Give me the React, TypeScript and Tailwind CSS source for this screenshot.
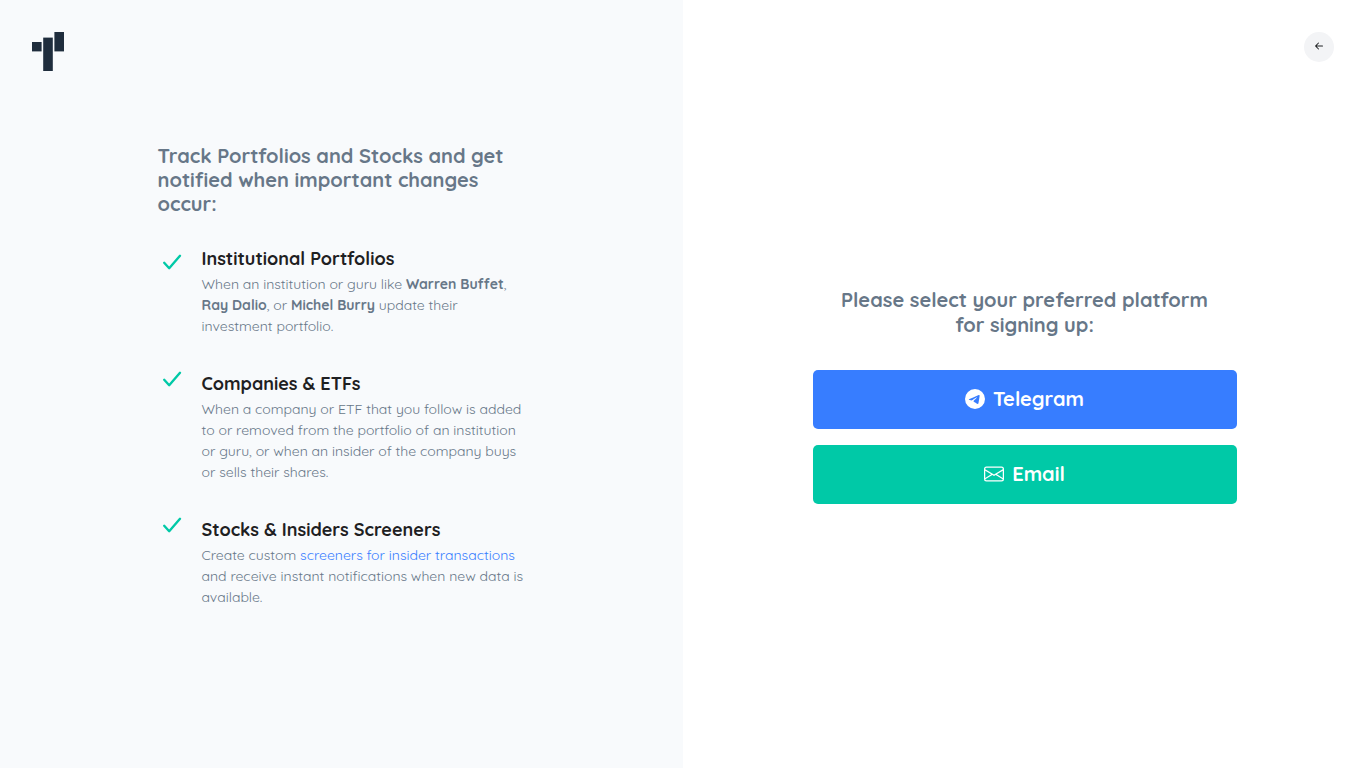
import type { ReactNode } from "react";
import { BsArrowLeftShort, BsEnvelope, BsTelegram } from "react-icons/bs";

// ── Icons ─────────────────────────────────────────────────────────────────────

function Logo() {
  return (
    <svg className="w-8 h-[39px]" viewBox="0 0 32 39" fill="#1f2d3d">
      <rect x="0" y="10" width="9.6" height="9.4" />
      <rect x="11.2" y="5.6" width="9.6" height="33.4" />
      <rect x="22.4" y="0" width="9.6" height="19.4" />
    </svg>
  );
}

function Check() {
  return (
    <svg
      className="w-7 h-7 flex-shrink-0"
      viewBox="0 0 28 28"
      fill="none"
      stroke="#00c9a7"
      strokeWidth="2.4"
      strokeLinecap="round"
      strokeLinejoin="round"
    >
      <path d="M6.2 14.8L11.2 20.2L22 7.8" />
    </svg>
  );
}

// ── Feature list ──────────────────────────────────────────────────────────────

function Feature({ title, children }: { title: string; children: ReactNode }) {
  return (
    <li className="group flex gap-4">
      <Check />
      <div className="flex-1 pt-2 group-first:pt-0">
        <h2 className="text-[18px] leading-[22px] font-bold text-[#1e2022] mb-1">
          {title}
        </h2>
        <p className="text-[14px] leading-[21px] text-[#677788]">{children}</p>
      </div>
    </li>
  );
}

export default function App() {
  return (
    <div className="min-h-screen grid md:grid-cols-2 bg-white font-['Quicksand','Lato',sans-serif]">
      <section className="flex flex-col bg-[#f8fafc]">
        <header className="px-8 pt-8">
          <a href="#home" aria-label="Home" className="inline-block align-top">
            <Logo />
          </a>
        </header>

        <div className="flex-1 flex items-center justify-center px-6 pb-22">
          <div className="w-full max-w-[368px]">
            <h1 className="text-[20px] leading-6 font-bold text-[#677788] mb-8">
              Track Portfolios and Stocks and get notified when important
              changes occur:
            </h1>

            <ul className="flex flex-col gap-7">
              <Feature title="Institutional Portfolios">
                When an institution or guru like{" "}
                <strong className="font-bold">Warren Buffet</strong>,{" "}
                <strong className="font-bold">Ray Dalio</strong>, or{" "}
                <strong className="font-bold">Michel Burry</strong> update their
                investment portfolio.
              </Feature>
              <Feature title="Companies &amp; ETFs">
                When a company or ETF that you follow is added to or removed
                from the portfolio of an institution or guru, or when an insider
                of the company buys or sells their shares.
              </Feature>
              <Feature title="Stocks &amp; Insiders Screeners">
                Create custom{" "}
                <a href="#screeners" className="text-[#377dff] hover:underline">
                  screeners for insider transactions
                </a>{" "}
                and receive instant notifications when new data is available.
              </Feature>
            </ul>
          </div>
        </div>
      </section>

      <section className="flex flex-col">
        <header className="flex justify-end px-8 pt-8">
          <button
            aria-label="Go back"
            className="w-[30px] h-[30px] pb-0.5 flex items-center justify-center rounded-full bg-[#f3f4f6] text-[#1e2022]"
          >
            <BsArrowLeftShort className="w-4 h-4" />
          </button>
        </header>

        <main className="flex-1 flex items-center justify-center px-6 pb-[39px]">
          <div className="w-full max-w-[424px]">
            <h2 className="px-6 mb-[33px] text-center text-[20px] leading-[25px] font-bold text-[#677788]">
              Please select your preferred platform for signing up:
            </h2>

            <div className="flex flex-col gap-4">
              <button className="h-[59px] pb-0.5 flex items-center justify-center gap-2 rounded-[5px] bg-[#377dff] text-white text-[20px] font-bold">
                <BsTelegram className="w-5 h-5" />
                Telegram
              </button>
              <button className="h-[59px] pb-0.5 flex items-center justify-center gap-2 rounded-[5px] bg-[#00c9a7] text-white text-[20px] font-bold">
                <BsEnvelope className="w-5 h-5" />
                Email
              </button>
            </div>
          </div>
        </main>
      </section>
    </div>
  );
}
